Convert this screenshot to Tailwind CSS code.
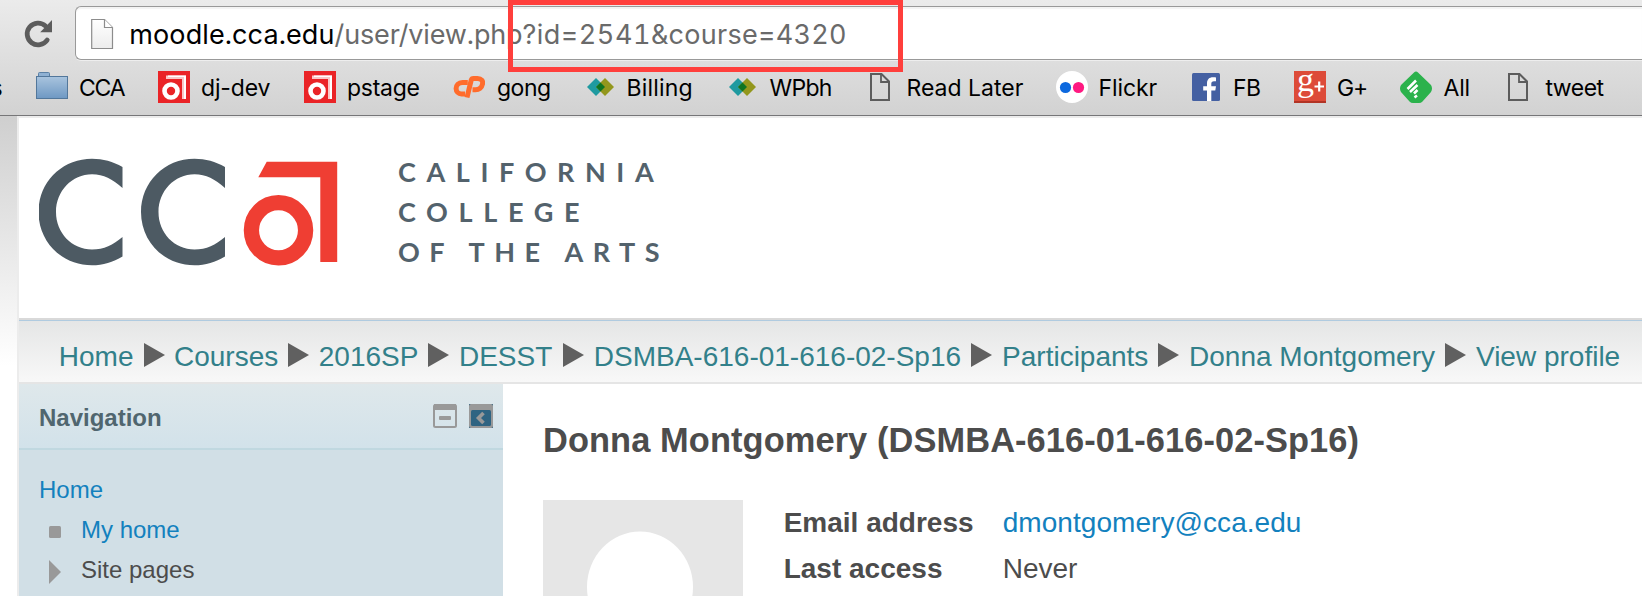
<!DOCTYPE html>
<html lang="en">
<head>
<meta charset="utf-8">
<title>Donna Montgomery: View profile</title>
<script src="https://cdn.jsdelivr.net/npm/@tailwindcss/browser@4"></script>
</head>
<body class="relative h-[596px] w-[1642px] overflow-hidden bg-white font-['Liberation_Sans',sans-serif]">

<!-- Browser toolbar -->
<header class="h-[116px] overflow-hidden border-b border-[#767678] bg-linear-to-b from-[#ebebeb] to-[#d2d2d2] pt-[6px] font-['Inter',sans-serif]">
  <div class="flex h-[54px] items-stretch">
    <svg class="mt-[13px] mr-[21px] ml-[24px] h-[30px] w-[30px] shrink-0" viewBox="24 19 30 30">
      <path d="M47.2 40 A10.900 10.900 0 1 1 45.500 26" fill="none" stroke="#5c5c5c" stroke-width="4.800" stroke-linecap="round"/>
      <path d="M52 20V32.2H40.2Z" fill="#5c5c5c"/>
    </svg>
    <div class="flex flex-1 items-center rounded-l-[6px] border border-r-0 border-[#999] bg-white pt-px shadow-[0_1px_0_#eee,inset_0_2px_1px_#f3f3f3]">
      <svg class="ml-[15px] h-[32px] w-[24px] shrink-0" viewBox="0 0 24 32">
        <defs><linearGradient id="pg" x2="0" y2="1"><stop stop-color="#fff"/><stop offset="1" stop-color="#ececec"/></linearGradient></defs>
        <path d="M.7 1.500H13.500L21.500 9.500V30.500H.7Z" fill="url(#pg)" stroke="#8c8c8c" stroke-width="1.200"/>
        <path d="M13.500 1.500V9.500H21.500" fill="#fff" stroke="#8c8c8c" stroke-width="1.200"/>
      </svg>
      <div class="mt-[2px] ml-[14.300px] text-[27px] leading-[40px] whitespace-pre tabular-nums"><span class="tracking-[0.100px] text-black">moodle.cca.edu</span><span class="tracking-[-0.150px] text-[#6a6a6a]">/user/view.php</span><span class="tracking-[0.500px] text-[#6a6a6a]">?id=2541</span><span class="tracking-[0.270px] text-[#6a6a6a]">&amp;course=4320</span></div>
    </div>
  </div>
  <nav class="mt-[11px] flex h-[34px] items-start text-[23px] leading-[34px] whitespace-nowrap text-black">
    <div class="w-[36px] shrink-0"><span class="-ml-[9.500px] block">s</span></div>
    <div class="flex w-[122px] shrink-0">
      <svg class="mr-[11px] h-[32px] w-[32px] shrink-0" viewBox="0 0 32 32">
        <defs><linearGradient id="fd" x2="0" y2="1"><stop stop-color="#a9c4de"/><stop offset="1" stop-color="#6e98c3"/></linearGradient></defs>
        <path d="M2.500 5V2.500Q2.500 1.500 3.500 1.500H12.500Q13.500 1.500 13.500 2.500V5.500" fill="#8fb1d3" stroke="#5a80a5"/>
        <rect x=".5" y="5.500" width="31" height="22" fill="url(#fd)" stroke="#52779b"/>
      </svg>
      <span class="tracking-[-1.200px]">CCA</span>
    </div>
    <div class="flex w-[146px] shrink-0">
      <svg class="mr-[11px] h-[32px] w-[32px] shrink-0" viewBox="0 0 32 32">
        <rect width="32" height="32" fill="#ea2427"/>
        <circle cx="13" cy="20" r="6.500" fill="none" stroke="#fff" stroke-width="4.600"/>
        <path d="M8 4.500H28V28H24V8H8Z" fill="#fff" fill-opacity=".75"/><path d="M10 4.500H28V28H26V6H10Z" fill="#fff"/>
      </svg>
      <span class="tracking-[-0.160px]">dj-dev</span>
    </div>
    <div class="flex w-[149px] shrink-0">
      <svg class="mr-[11px] h-[32px] w-[32px] shrink-0" viewBox="0 0 32 32">
        <rect width="32" height="32" fill="#ea2427"/>
        <circle cx="13" cy="20" r="6.500" fill="none" stroke="#fff" stroke-width="4.600"/>
        <path d="M8 4.500H28V28H24V8H8Z" fill="#fff" fill-opacity=".75"/><path d="M10 4.500H28V28H26V6H10Z" fill="#fff"/>
      </svg>
      <span class="tracking-[-0.280px]">pstage</span>
    </div>
    <div class="flex w-[134px] shrink-0">
      <svg class="mr-[12px] h-[32px] w-[32px] shrink-0" viewBox="0 0 32 32" fill="none" stroke="#ff6c2c" stroke-width="5">
        <path d="M14.800 11.500H9.500C5.500 11.500 3.100 14.300 3.100 17.500C3.100 20.500 5.300 23 8.500 23H12"/>
        <path d="M14 26.500L18.200 9.200Q18.700 7.500 20.500 7.500H24.500C28.500 7.500 30.200 10 29.500 13C28.800 16.500 26 18.800 22.500 18.800H19.500" stroke-linejoin="round"/>
      </svg>
      <span class="tracking-[-0.500px]">gong</span>
    </div>
    <div class="flex w-[142px] shrink-0">
      <svg class="mr-[12.500px] h-[32px] w-[27px] shrink-0" viewBox="0 0 27 32">
        <path d="M0 16L9 7L18 16L9 25Z" fill="#1f9aa0"/><path d="M9 16L18 7L27 16L18 25Z" fill="#93971d"/><path d="M9 16L13.500 11.500L18 16L13.500 20.500Z" fill="#0e7422"/>
      </svg>
      <span class="tracking-[0.180px]">Billing</span>
    </div>
    <div class="flex w-[141px] shrink-0">
      <svg class="mr-[13.500px] h-[32px] w-[27px] shrink-0" viewBox="0 0 27 32">
        <path d="M0 16L9 7L18 16L9 25Z" fill="#1f9aa0"/><path d="M9 16L18 7L27 16L18 25Z" fill="#93971d"/><path d="M9 16L13.500 11.500L18 16L13.500 20.500Z" fill="#0e7422"/>
      </svg>
      <span class="tracking-[-0.700px]">WPbh</span>
    </div>
    <div class="flex w-[186px] shrink-0">
      <svg class="mr-[16.500px] h-[32px] w-[20px] shrink-0" viewBox="0 0 20 32" fill="none" stroke="#5c5c5c" stroke-width="2">
        <path d="M1 3H11.500L19 10.500V29H1Z"/><path d="M11 3V11H19" stroke-width="1.800"/>
      </svg>
      <span>Read Later</span>
    </div>
    <div class="flex w-[136px] shrink-0">
      <svg class="mr-[10.500px] h-[32px] w-[32px] shrink-0" viewBox="0 0 32 32">
        <circle cx="16" cy="16" r="16" fill="#fff"/><circle cx="9.500" cy="16.500" r="5.600" fill="#0c68de"/><circle cx="22.500" cy="16.500" r="5.600" fill="#ff1981"/>
      </svg>
      <span class="tracking-[-0.100px]">Flickr</span>
    </div>
    <div class="flex w-[102px] shrink-0">
      <svg class="mr-[13px] h-[32px] w-[28px] shrink-0" viewBox="0 0 28 32">
        <rect y="2" width="28" height="28" rx="1.500" fill="#4460a2"/>
        <path d="M15 30V19.500H11.200V15.200H15V12.200C15 8.300 17.400 6.200 20.900 6.200C22.500 6.200 24 6.400 24 6.400V10.200H22C20 10.200 19.300 11.300 19.300 12.700V15.200H24L23.300 19.500H19.300V30Z" fill="#fff"/>
      </svg>
      <span class="tracking-[-0.580px]">FB</span>
    </div>
    <div class="flex w-[106px] shrink-0">
      <svg class="mr-[11px] h-[32px] w-[32px] shrink-0" viewBox="0 0 32 32">
        <rect width="32" height="32" fill="#dd4b39"/><rect y="30" width="32" height="2" fill="#b23425"/>
        <text x="3" y="20" fill="#fff" class="font-['Liberation_Serif',serif] text-[34px] font-normal">g</text>
        <path d="M20.500 15.500H30M25.200 10.500V20.500" fill="none" stroke="#fff" stroke-width="2.200"/>
      </svg>
      <span class="tracking-[-1.160px]">G+</span>
    </div>
    <div class="flex w-[108px] shrink-0">
      <svg class="mr-[11.500px] h-[32px] w-[32px] shrink-0" viewBox="0 0 32 32">
        <path d="M14 1.500Q16 -.5 18 1.500L31 14Q33 17.500 31 21L22.500 30.500Q21 32 19 32H13Q11 32 9.500 30.500L1 21Q-1 17.500 1 14Z" fill="#2bb24c"/>
        <path d="M7.500 18L16 9.500M10 21L17.500 14M14 22.500L17.500 19M14.500 26.500L17 24.500" fill="none" stroke="#fff" stroke-width="2.500"/>
      </svg>
      <span class="tracking-[-0.220px]">All</span>
    </div>
    <div class="flex shrink-0">
      <svg class="mr-[17.500px] h-[32px] w-[20px] shrink-0" viewBox="0 0 20 32" fill="none" stroke="#5c5c5c" stroke-width="2">
        <path d="M1 3H11.500L19 10.500V29H1Z"/><path d="M11 3V11H19" stroke-width="1.800"/>
      </svg>
      <span class="tracking-[-0.500px]">tweet</span>
    </div>
  </nav>
</header>

<!-- Page -->
<div class="flex h-[480px] bg-linear-to-b from-[#cfcfcf] to-white to-[250px]">
  <div class="ml-[17px] flex flex-1 flex-col border-t-2 border-l-2 border-[#ececec] bg-white">
    <div class="flex h-[200px] shrink-0 pl-[20px]">
      <svg class="mt-[40px] h-[108px] w-[299px]" viewBox="39 158 299 108">
        <g fill="#4d5a63">
          <path id="c" d="M122.500 167C113 161.500 103 158.700 92 158.700C62 158.700 38.500 182 38.500 212C38.500 242 62 265.300 92 265.300C103 265.300 113 262 122.500 256.500V237C113 245 104 249.500 92 249.500C72 249.500 56 233 56 212C56 191 72 174.300 92 174.300C104 174.300 112 179 122.500 188Z"/>
          <use href="#c" x="102.500"/>
        </g>
        <path d="M266.700 161.700H337.200V262H320.300V177.300H258.300Z" fill="#ef3e33"/>
        <ellipse cx="278.500" cy="230.300" rx="27.100" ry="27.600" fill="none" stroke="#ef3e33" stroke-width="15.300"/>
      </svg>
      <div class="mt-[34px] ml-[60px] font-['Lato',sans-serif] text-[27px] leading-[40px] font-bold whitespace-nowrap text-[#53626c]">
        <div class="tracking-[10.580px]">CALIFORNIA</div>
        <div class="tracking-[10.660px]">COLLEGE</div>
        <div class="tracking-[9.450px]">OF THE ARTS</div>
      </div>
    </div>

    <div class="shrink-0 border-t-2 border-[#d9d9d9]">
      <nav class="flex h-[64px] items-center border-t border-b-2 border-t-[#b0cbe0] border-b-[#e5e5e5] bg-linear-to-b from-[#e5e6e6] to-[#f8f8f8] pt-[10px] pl-[39.800px] text-[28px] leading-[40px] whitespace-nowrap text-[#32808a]">
        <span>Home</span>
        <svg class="mr-[9.500px] mb-[3px] ml-[10px] h-[24px] w-[21px] shrink-0" viewBox="0 0 21 24"><path d="M0 0L21 12L0 24Z" fill="#606060"/></svg>
        <span>Courses</span>
        <svg class="mr-[9.500px] mb-[3px] ml-[10px] h-[24px] w-[21px] shrink-0" viewBox="0 0 21 24"><path d="M0 0L21 12L0 24Z" fill="#606060"/></svg>
        <span>2016SP</span>
        <svg class="mr-[9.500px] mb-[3px] ml-[10px] h-[24px] w-[21px] shrink-0" viewBox="0 0 21 24"><path d="M0 0L21 12L0 24Z" fill="#606060"/></svg>
        <span>DESST</span>
        <svg class="mr-[10px] mb-[3px] ml-[10.500px] h-[24px] w-[21px] shrink-0" viewBox="0 0 21 24"><path d="M0 0L21 12L0 24Z" fill="#606060"/></svg>
        <span>DSMBA-616-01-616-02-Sp16</span>
        <svg class="mr-[10px] mb-[3px] ml-[10px] h-[24px] w-[21px] shrink-0" viewBox="0 0 21 24"><path d="M0 0L21 12L0 24Z" fill="#606060"/></svg>
        <span>Participants</span>
        <svg class="mr-[9.700px] mb-[3px] ml-[10px] h-[24px] w-[21px] shrink-0" viewBox="0 0 21 24"><path d="M0 0L21 12L0 24Z" fill="#606060"/></svg>
        <span>Donna Montgomery</span>
        <svg class="mr-[10px] mb-[3px] ml-[10px] h-[24px] w-[21px] shrink-0" viewBox="0 0 21 24"><path d="M0 0L21 12L0 24Z" fill="#606060"/></svg>
        <span>View profile</span>
      </nav>
    </div>

    <div class="flex flex-1">
      <aside class="w-[484px] shrink-0 bg-[#d1dfe6]">
        <div class="flex h-[66px] items-start border-b-2 border-[#c0d8e0] bg-linear-to-b from-[#dfe8eb] to-[#d2e2ea] pt-[20px] pr-[10px] pl-[20px]">
          <h2 class="mt-px flex-1 text-[24px] leading-[26px] font-bold text-[#50666f]">Navigation</h2>
          <svg class="h-[24px] w-[24px]" viewBox="0 0 24 24">
            <rect x="1" y="1" width="22" height="22" rx="1.500" fill="none" stroke="#999" stroke-width="2"/>
            <rect x="1" y="0" width="22" height="6" fill="#999"/>
            <rect x="6" y="12" width="12" height="4" rx="1" fill="#999"/>
          </svg>
          <svg class="ml-[12px] h-[24px] w-[24px]" viewBox="0 0 24 24">
            <rect width="24" height="24" fill="#2f6482"/><rect width="24" height="24" rx="2" fill="#999"/>
            <rect x="2" y="6" width="20" height="16" rx="1.500" fill="#2f6482"/>
            <path d="M14.500 9L9.500 14L14.500 19" fill="none" stroke="#999" stroke-width="3.600"/>
          </svg>
        </div>
        <ul class="pt-[20px] pl-[20px] text-[24px] leading-[40px] text-[#1381be]">
          <li>Home</li>
          <li class="flex pl-[10px]"><svg class="mt-[16px] mr-[20px] h-[12px] w-[12px]" viewBox="0 0 12 12"><rect width="12" height="12" rx="1.500" fill="#999"/></svg>My home</li>
          <li class="flex pl-[10px] text-[#4c4c4c]"><svg class="mt-[10px] mr-[20px] h-[24px] w-[12px]" viewBox="0 0 12 24"><path d="M0 0L12 12L0 24Z" fill="#999"/></svg>Site pages</li>
        </ul>
      </aside>
      <main class="flex-1 pl-[40px] text-[#4c4c4c]">
        <h1 class="mt-[36px] text-[34.400px] leading-[40px] font-bold tracking-[0.090px] whitespace-nowrap">Donna Montgomery (DSMBA-616-01-616-02-Sp16)</h1>
        <div class="mt-[39px] flex items-start">
          <svg class="mt-px h-[96px] w-[200px]" viewBox="0 0 200 96">
            <rect width="200" height="96" fill="#e6e6e6"/><ellipse cx="97" cy="87" rx="53" ry="55.500" fill="#fff"/>
          </svg>
          <dl class="mt-px ml-[40.700px] grid auto-rows-[46px] grid-cols-[219px_auto] text-[28px] leading-[46px] whitespace-nowrap">
            <dt class="font-bold">Email address</dt><dd class="tracking-[0.060px] text-[#1381be]">dmontgomery@cca.edu</dd>
            <dt class="font-bold">Last access</dt><dd>Never</dd>
          </dl>
        </div>
      </main>
    </div>
  </div>
</div>

<!-- Highlight around the query string -->
<div class="absolute top-0 left-[508px] h-[72px] w-[395px] border-5 border-[#ff3f3c]"></div>
</body>
</html>
